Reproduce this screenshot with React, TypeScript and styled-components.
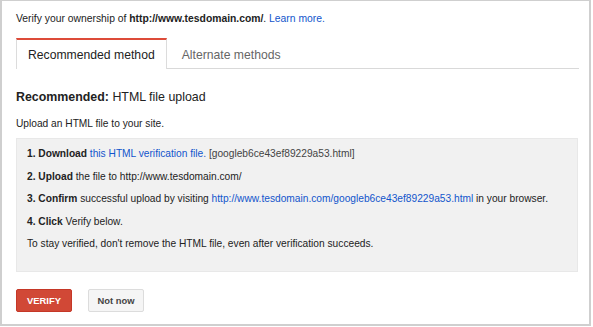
import React from "react";
import styled, { createGlobalStyle } from "styled-components";

const Global = createGlobalStyle`
  html, body { margin: 0; padding: 0; background: #fff; }
  body { font-family: "Liberation Sans", Arial, sans-serif; color: #222; }
  * { box-sizing: border-box; }
`;

const Frame = styled.div`
  width: 591px;
  height: 326px;
  border: 2px solid #cfcfcf;
  border-top-width: 1px;
  background: #fff;
  padding: 11px 12px 0 14px;
  font-size: 10.2px;
`;

const Intro = styled.div`
  line-height: 14px;
  font-size: 10.35px;
  color: #222;
`;

const Link = styled.a`
  color: #15c;
  text-decoration: none;
`;

const Tabs = styled.div`
  display: flex;
  margin-top: 12px;
  border-bottom: 1px solid #d9d9d9;
  width: 563px;
`;

const Tab = styled.div<{ $active?: boolean }>`
  height: 31px;
  padding: 1px 11px 0 ${(p) => (p.$active ? "11px" : "14px")};
  display: flex;
  align-items: center;
  font-size: 12.2px;
  color: ${(p) => (p.$active ? "#222" : "#666")};
  border-top: 2px solid ${(p) => (p.$active ? "#dd4b39" : "transparent")};
  border-left: 1px solid ${(p) => (p.$active ? "#dcdcdc" : "transparent")};
  border-right: 1px solid ${(p) => (p.$active ? "#dcdcdc" : "transparent")};
  background: ${(p) => (p.$active ? "#fff" : "transparent")};
  margin-bottom: ${(p) => (p.$active ? "-1px" : "0")};
  ${(p) => (p.$active ? "" : "height: 30px;")}
`;

const Heading = styled.h2`
  margin: 20px 0 0;
  font-size: 12.4px;
  font-weight: normal;
  line-height: 16px;
  color: #222;
  b { font-weight: bold; }
`;

const Sub = styled.p`
  margin: 12px 0 0;
  line-height: 14px;
`;

const Steps = styled.div`
  margin-top: 7px;
  width: 562px;
  background: #f1f1f1;
  border: 1px solid #e8e8e8;
  padding: 8px 10px 20px;
  display: flex;
  flex-direction: column;
  gap: 8.5px;
`;

const Step = styled.div`
  line-height: 14px;
  color: #222;
  white-space: nowrap;
  b { font-weight: bold; }
`;

const Gray = styled.span`
  color: #444;
`;

const Actions = styled.div`
  display: flex;
  gap: 16px;
  margin-top: 17px;
`;

const Button = styled.button<{ $primary?: boolean }>`
  height: 23px;
  width: 56px;
  padding: 0;
  font-family: "Liberation Sans", Arial, sans-serif;
  font-size: 9.4px;
  font-weight: bold;
  border-radius: 2px;
  border: 1px solid ${(p) => (p.$primary ? "#c53727" : "#dcdcdc")};
  background: ${(p) => (p.$primary ? "#d14836" : "#f5f5f5")};
  color: ${(p) => (p.$primary ? "#fff" : "#444")};
  cursor: pointer;
`;

export default function App() {
  return (
    <>
      <Global />
      <Frame>
        <Intro>
          Verify your ownership of <b>http://www.tesdomain.com/</b>.{" "}
          <Link href="#">Learn more.</Link>
        </Intro>
        <Tabs>
          <Tab $active>Recommended method</Tab>
          <Tab>Alternate methods</Tab>
        </Tabs>
        <Heading>
          <b>Recommended:</b> HTML file upload
        </Heading>
        <Sub>Upload an HTML file to your site.</Sub>
        <Steps>
          <Step>
            <b>1. Download</b> <Link href="#">this HTML verification file.</Link>{" "}
            <Gray>[googleb6ce43ef89229a53.html]</Gray>
          </Step>
          <Step>
            <b>2. Upload</b> the file to http://www.tesdomain.com/
          </Step>
          <Step>
            <b>3. Confirm</b> successful upload by visiting{" "}
            <Link href="#">http://www.tesdomain.com/googleb6ce43ef89229a53.html</Link> in your
            browser.
          </Step>
          <Step>
            <b>4. Click</b> Verify below.
          </Step>
          <Step>To stay verified, don't remove the HTML file, even after verification succeeds.</Step>
        </Steps>
        <Actions>
          <Button $primary>VERIFY</Button>
          <Button>Not now</Button>
        </Actions>
      </Frame>
    </>
  );
}
